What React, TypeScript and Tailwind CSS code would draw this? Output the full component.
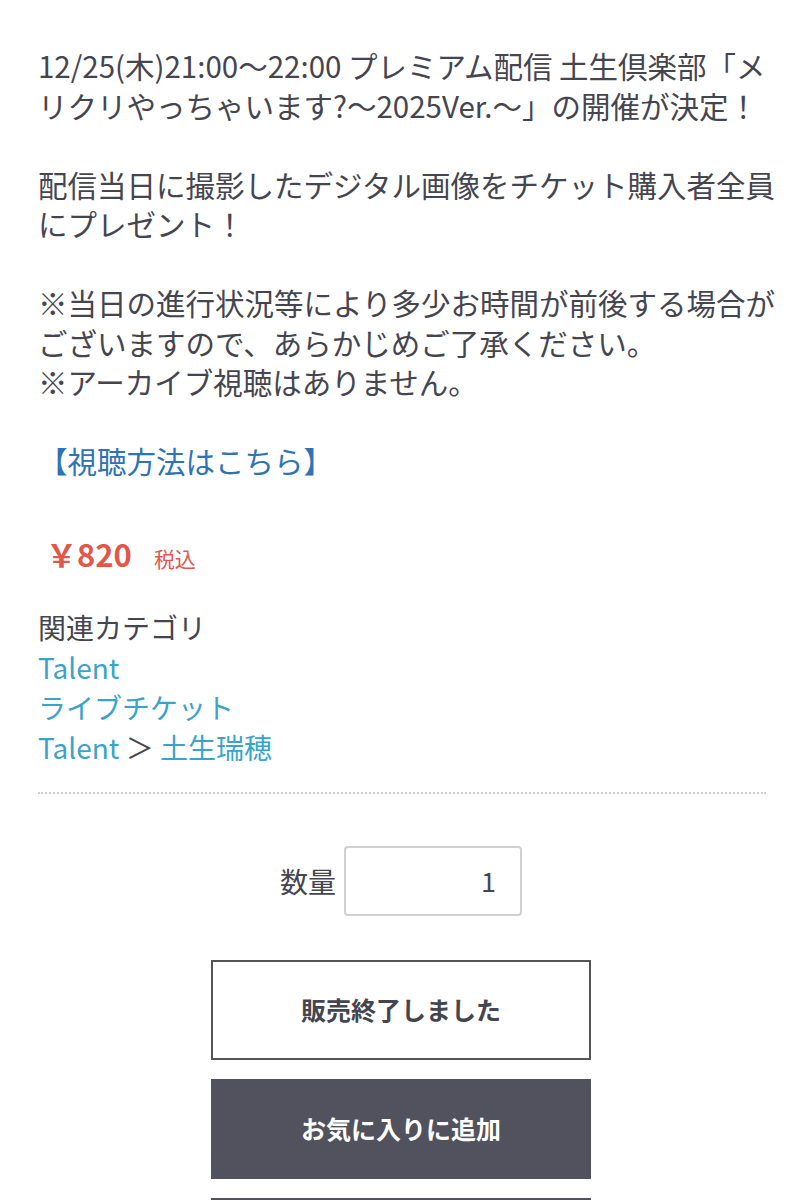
const FONT = "font-['Noto_Sans_CJK_JP','Noto_Sans',sans-serif]";

function PriceBlock() {
  return (
    <div className="flex items-baseline pl-[8px]">
      <span className="text-[31px] font-bold text-[#e0584a]">￥820</span>
      <span className="ml-[22px] text-[21px] text-[#e0584a]">税込</span>
    </div>
  );
}

function Categories() {
  return (
    <div className="mt-[30px] text-[28px] leading-[40px]">
      <p className="text-[#45454f]">関連カテゴリ</p>
      <p><a className="text-[#3ba3c9]">Talent</a></p>
      <p><a className="text-[#3ba3c9]">ライブチケット</a></p>
      <p>
        <a className="text-[#3ba3c9]">Talent</a>
        <span className="text-[#45454f]"> ＞ </span>
        <a className="text-[#3ba3c9]">土生瑞穂</a>
      </p>
    </div>
  );
}

export default function App() {
  return (
    <div className={`min-h-[1200px] overflow-hidden bg-white ${FONT}`}>
      <div className="pl-[38px] pr-[22px] pt-[46px]">
        <div className="text-[29.5px] leading-[39.5px] text-[#45454f]">
          <p>12/25(木)21:00〜22:00 プレミアム配信 土生倶楽部「メリクリやっちゃいます?〜2025Ver.〜」の開催が決定！</p>
          <p className="mt-[39.5px]">配信当日に撮影したデジタル画像をチケット購入者全員にプレゼント！</p>
          <p className="mt-[39.5px]">
            ※当日の進行状況等により多少お時間が前後する場合がございますので、あらかじめご了承ください。
            <br />
            ※アーカイブ視聴はありません。
          </p>
          <p className="mt-[39.5px]">
            <a className="text-[#2f73b5]">【視聴方法はこちら】</a>
          </p>
        </div>

        <div className="mt-[50px]">
          <PriceBlock />
        </div>

        <Categories />

        <div className="mt-[25px] mr-[14px] border-t-2 border-dotted border-[#cfcfcf]" />
      </div>

      <div className="mt-[52px] flex items-center justify-center gap-[8px]">
        <span className="text-[28px] text-[#45454f]">数量</span>
        <div className="flex h-[70px] w-[178px] items-center justify-end rounded-[4px] border-2 border-[#d0d0d0] pr-[24px] text-[27px] text-[#45454f]">
          1
        </div>
      </div>

      <div className="mt-[44px] flex flex-col items-center gap-[19px]">
        <button
          type="button"
          className="h-[100px] w-[380px] border-2 border-[#555] bg-white text-[25px] font-bold text-[#45454f]"
        >
          販売終了しました
        </button>
        <button
          type="button"
          className="h-[100px] w-[380px] bg-[#52525f] text-[25px] font-bold text-white"
        >
          お気に入りに追加
        </button>
        <div className="h-[100px] w-[380px] bg-[#52525f]" />
      </div>
    </div>
  );
}
